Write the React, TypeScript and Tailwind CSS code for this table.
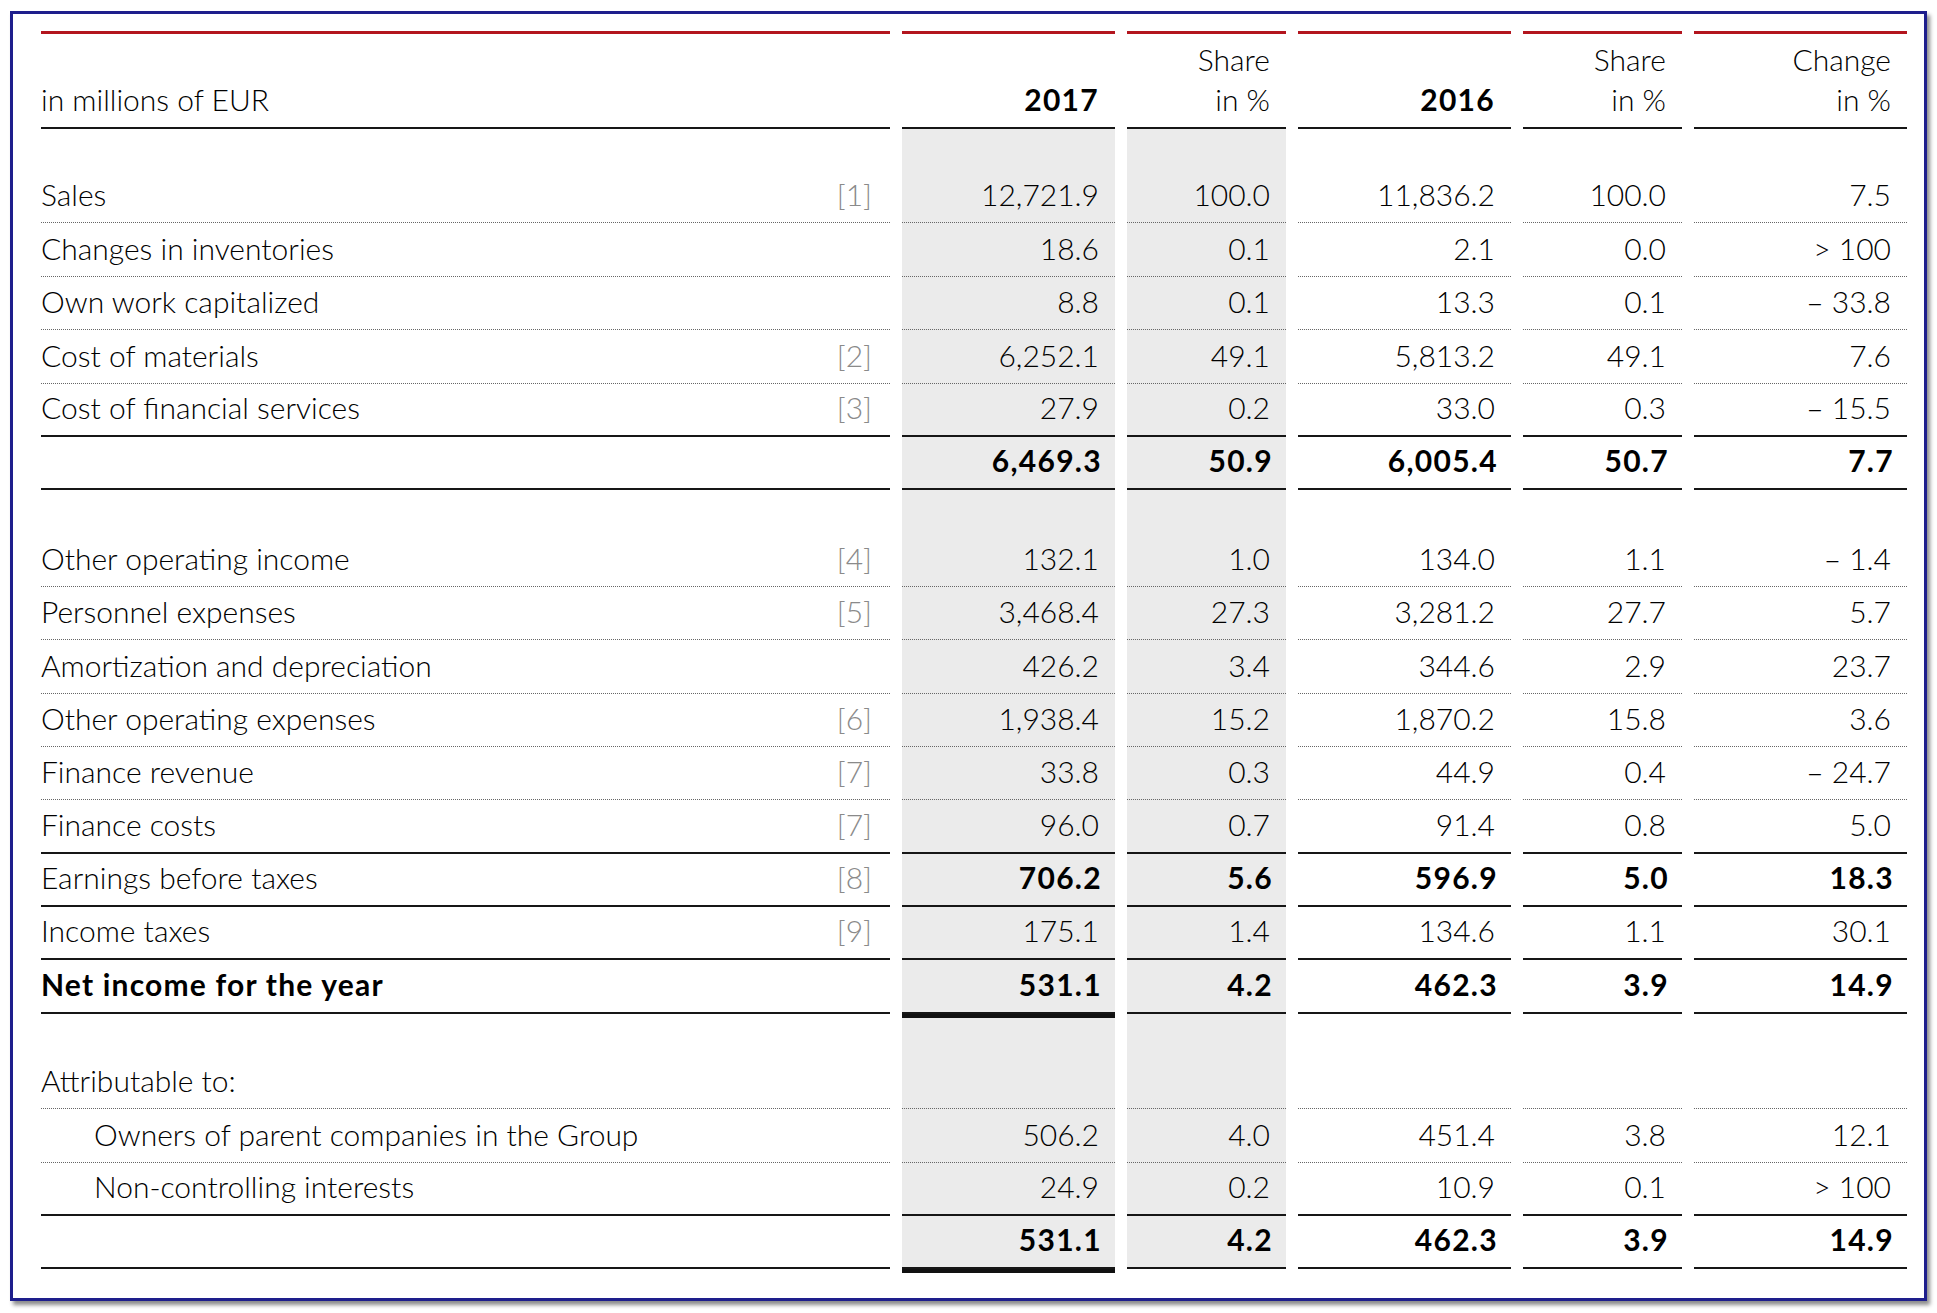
import React from "react";

type Line = "dot" | "solid" | "none";

type Row = {
  label?: string;
  note?: string;
  values?: string[];
  line: Line;
  bold?: boolean;
  boldLabel?: boolean;
  indent?: boolean;
  thick?: boolean;
};

const cols = "grid grid-cols-[849px_213px_159px_213px_159px_213px] gap-x-[12px]";

const top: Row[] = [
  { label: "Sales", note: "[1]", values: ["12,721.9", "100.0", "11,836.2", "100.0", "7.5"], line: "dot" },
  { label: "Changes in inventories", values: ["18.6", "0.1", "2.1", "0.0", "> 100"], line: "dot" },
  { label: "Own work capitalized", values: ["8.8", "0.1", "13.3", "0.1", "– 33.8"], line: "dot" },
  { label: "Cost of materials", note: "[2]", values: ["6,252.1", "49.1", "5,813.2", "49.1", "7.6"], line: "dot" },
  { label: "Cost of financial services", note: "[3]", values: ["27.9", "0.2", "33.0", "0.3", "– 15.5"], line: "solid" },
  { values: ["6,469.3", "50.9", "6,005.4", "50.7", "7.7"], line: "solid", bold: true },
];

const middle: Row[] = [
  { label: "Other operating income", note: "[4]", values: ["132.1", "1.0", "134.0", "1.1", "– 1.4"], line: "dot" },
  { label: "Personnel expenses", note: "[5]", values: ["3,468.4", "27.3", "3,281.2", "27.7", "5.7"], line: "dot" },
  { label: "Amortization and depreciation", values: ["426.2", "3.4", "344.6", "2.9", "23.7"], line: "dot" },
  { label: "Other operating expenses", note: "[6]", values: ["1,938.4", "15.2", "1,870.2", "15.8", "3.6"], line: "dot" },
  { label: "Finance revenue", note: "[7]", values: ["33.8", "0.3", "44.9", "0.4", "– 24.7"], line: "dot" },
  { label: "Finance costs", note: "[7]", values: ["96.0", "0.7", "91.4", "0.8", "5.0"], line: "solid" },
  { label: "Earnings before taxes", note: "[8]", values: ["706.2", "5.6", "596.9", "5.0", "18.3"], line: "solid", bold: true },
  { label: "Income taxes", note: "[9]", values: ["175.1", "1.4", "134.6", "1.1", "30.1"], line: "solid" },
  { label: "Net income for the year", values: ["531.1", "4.2", "462.3", "3.9", "14.9"], line: "solid", bold: true, boldLabel: true, thick: true },
];

const bottom: Row[] = [
  { label: "Attributable to:", values: ["", "", "", "", ""], line: "dot" },
  { label: "Owners of parent companies in the Group", indent: true, values: ["506.2", "4.0", "451.4", "3.8", "12.1"], line: "dot" },
  { label: "Non-controlling interests", indent: true, values: ["24.9", "0.2", "10.9", "0.1", "> 100"], line: "solid" },
  { values: ["531.1", "4.2", "462.3", "3.9", "14.9"], line: "solid", bold: true, thick: true },
];

const lineClass = (line: Line) =>
  line === "dot"
    ? "border-b border-dotted border-[#666]"
    : line === "solid"
      ? "border-b-2 border-solid border-[#161616]"
      : "";

function TableRow({ row }: { row: Row }) {
  return (
    <div className={`${cols} h-[53.4px]`}>
      <div className={`${lineClass(row.line)} flex items-end justify-between pb-[13px] ${row.indent ? "pl-[53px]" : ""}`}>
        <span className={row.boldLabel ? "font-bold tracking-[1.2px]" : ""}>{row.label}</span>
        {row.note && <span className="pr-[18px] text-[#8a8a8a]">{row.note}</span>}
      </div>
      {row.values?.map((v, i) => (
        <div
          key={i}
          className={`flex items-end justify-end pb-[13px] ${i < 2 ? "bg-[#ebebeb]" : ""} ${lineClass(row.line)} ${
            row.thick && i === 0 ? "relative z-10 shadow-[0_4px_0_#111]" : ""
          } ${row.bold ? "font-bold tracking-[1.3px] pr-[13px]" : "pr-[16px]"}`}
        >
          {v}
        </div>
      ))}
    </div>
  );
}

function Spacer({ h }: { h: string }) {
  return (
    <div className={`${cols} ${h}`}>
      <div />
      <div className="bg-[#ebebeb]" />
      <div className="bg-[#ebebeb]" />
      <div />
      <div />
      <div />
    </div>
  );
}

export default function App() {
  const head = "border-t-[3px] border-t-[#b3151e] border-b-2 border-b-[#161616] flex flex-col items-end justify-end pb-[13px] pr-[16px]";
  return (
    <div className="min-h-screen bg-white">
      <div className="ml-[10px] mt-[11px] w-[1917px] h-[1290px] border-[3px] border-[#1e1e8c] bg-white shadow-[3px_4px_4px_rgba(0,0,0,0.45)] pl-[28px] pt-[17px] font-['Lato',sans-serif] font-light text-[30px] leading-none text-black">
        <div className={`${cols} h-[98px]`}>
          <div className="border-t-[3px] border-t-[#b3151e] border-b-2 border-b-[#161616] flex items-end pb-[13px]">
            in millions of EUR
          </div>
          <div className={head}>
            <span className="font-bold tracking-[1.3px]">2017</span>
          </div>
          <div className={head}>
            <span className="mb-[10px]">Share</span>
            <span>in %</span>
          </div>
          <div className={head}>
            <span className="font-bold tracking-[1.3px]">2016</span>
          </div>
          <div className={head}>
            <span className="mb-[10px]">Share</span>
            <span>in %</span>
          </div>
          <div className={head}>
            <span className="mb-[10px]">Change</span>
            <span>in %</span>
          </div>
        </div>
        <Spacer h="h-[41px]" />
        {top.map((r, i) => (
          <TableRow key={i} row={r} />
        ))}
        <Spacer h="h-[43px]" />
        {middle.map((r, i) => (
          <TableRow key={i} row={r} />
        ))}
        <Spacer h="h-[42px]" />
        {bottom.map((r, i) => (
          <TableRow key={i} row={r} />
        ))}
      </div>
    </div>
  );
}
